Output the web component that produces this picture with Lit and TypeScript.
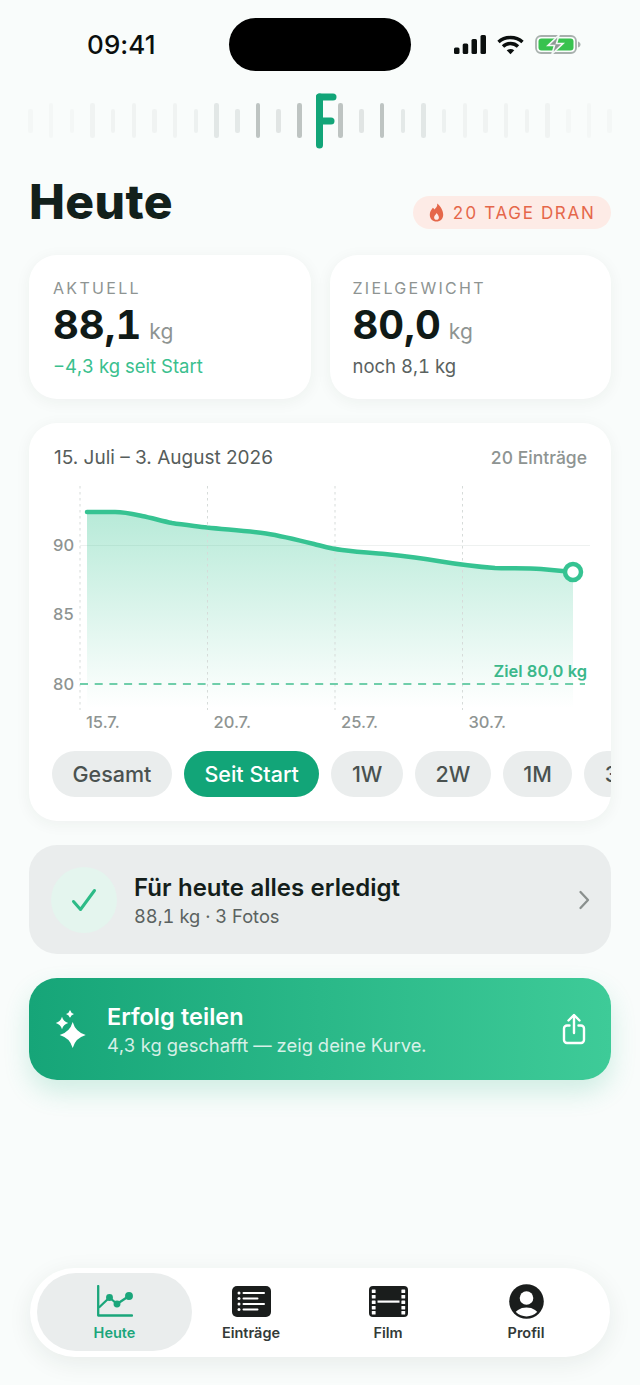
import { LitElement, html, css, svg } from "lit";
import { customElement } from "lit/decorators.js";

const CURVE = "M87 512 C98 512 106 512 115 512 C125 512 133 514 142 516 C152 518 162 521 172 523 C184 525 196 526 207 527.5 C226 529.5 248 531 266 533.5 C282 536 298 540 314 544 C324 546.5 332 549 342 550 C356 552 372 553 385 554 C403 556 420 558 438 561 C456 564 474 566.5 495 568 C512 568.500 528 568 541 569 C552 570 562 571 573 572";

const star = (cx: number, cy: number, r: number, k = 0.22) => {
  const c = r * k;
  return `M${cx} ${cy - r}Q${cx + c} ${cy - c} ${cx + r} ${cy}Q${cx + c} ${cy + c} ${cx} ${cy + r}Q${cx - c} ${cy + c} ${cx - r} ${cy}Q${cx - c} ${cy - c} ${cx} ${cy - r}Z`;
};

@customElement("app-root")
export class AppRoot extends LitElement {
  static styles = css`
    :host {
      display: flex;
      flex-direction: column;
      min-height: 1385px;
      box-sizing: border-box;
      background: #f9fcfb;
      font-family: Inter, "Liberation Sans", sans-serif;
      font-variant-numeric: tabular-nums;
      color: #141e1b;
      overflow: hidden;
    }
    * { box-sizing: border-box; }
    svg { display: block; flex: none; }

    .status { height: 89px; padding: 18px 59px 0 87px; display: flex; align-items: flex-start; }
    .time { width: 142px; font-size: 26px; font-weight: 500; line-height: 53px; color: #0b0f0e; letter-spacing: 0.1px; font-variant-numeric: normal; }
    .island { width: 182px; height: 53px; margin-left: 1px; border-radius: 27px; background: #000; flex: none; }
    .sys { margin-left: 43px; height: 53px; display: flex; align-items: center; gap: 11px; }

    .brand { height: 60px; position: relative; display: flex; justify-content: center; align-items: center; gap: 16.2px; padding-top: 3px; }
    .tick { width: 4.5px; border-radius: 2.250px; background: #a9b1af; flex: none; }
    .logo { position: absolute; left: 315px; top: 4px; }

    .head { height: 106px; padding: 0 29px; display: flex; justify-content: space-between; align-items: flex-start; }
    h1 { margin: 25px 0 0; font-size: 48px; line-height: 56px; font-weight: 800; letter-spacing: 0.4px; color: #12201b; }
    .streak { margin-top: 47px; height: 33px; width: 198px; border-radius: 17px; background: #fdebe6; color: #e5674a; display: flex; align-items: center; justify-content: center; gap: 9px; font-size: 17px; letter-spacing: 1.7px; font-weight: 400; }

    .main { padding: 0 29px; display: flex; flex-direction: column; gap: 24px; }
    .stats { display: grid; grid-template-columns: 282px 281px; gap: 19px; }
    .card { background: #fff; border-radius: 28px; box-shadow: 0 3px 16px rgba(30, 50, 44, 0.055); }
    .stat { height: 144px; padding: 24px 22px 0 24px; }
    .stat.second { padding-left: 22.500px; }
    .stat-label { font-size: 16px; line-height: 19px; letter-spacing: 2.300px; color: #8e9492; }
    .stat-val { margin-top: 3px; font-size: 40px; line-height: 48px; font-weight: 700; color: #101a17; }
    .stat-val span { font-size: 21px; font-weight: 400; color: #8e9492; margin-left: 8px; }
    .stat-sub { margin-top: -1.500px; font-size: 18.500px; line-height: 22px; color: #5a6260; }
    .stat-sub.good { color: #3abf8e; }

    .chart { height: 398px; position: relative; overflow: hidden; padding: 23px 24px 0 25px; }
    .chart-head { display: flex; justify-content: space-between; font-size: 19px; line-height: 23px; color: #565d5b; }
    .chart-head span:first-child { font-variant-numeric: normal; }
    .chart-head span:last-child { color: #8e9492; font-size: 17.500px; font-weight: 500; }
    .plot { position: absolute; left: 0; top: 0; }
    .axis { font: 500 16.500px Inter, sans-serif; fill: #8e9492; }
    .goal { font: 600 16.500px Inter, sans-serif; fill: #3bb88b; }
    .chips { position: absolute; left: 23px; top: 328px; display: flex; gap: 12px; }
    .chip { height: 46px; padding: 0 20.500px; border-radius: 23px; background: #eaeded; color: #4a5250; font-size: 21.500px; line-height: 46px; white-space: nowrap; font-weight: 500; font-variant-numeric: normal; }
    .chip.on { background: #12a578; color: #fff; }

    .done { height: 109px; border-radius: 28px; background: #eaeded; display: flex; align-items: center; padding: 0 21px 0 22px; }
    .tickc { width: 66px; height: 66px; border-radius: 50%; background: #e4f5ee; display: flex; align-items: center; justify-content: center; }
    .done-txt { margin-left: 17px; flex: 1; }
    .done-t { font-size: 24px; line-height: 30px; font-weight: 600; color: #141e1b; }
    .done-s { margin-top: 2px; font-size: 18.300px; line-height: 22px; color: #5a6260; }

    .share { height: 102px; border-radius: 28px; background: linear-gradient(90deg, #16a578, #3ecb98); box-shadow: 0 12px 26px rgba(40, 180, 135, 0.2); display: flex; align-items: center; padding: 0 25px 0 26px; color: #fff; }
    .share-txt { margin-left: 20px; flex: 1; }
    .share-t { font-size: 23.500px; line-height: 29px; font-weight: 600; }
    .share-s { font-size: 18.400px; line-height: 22px; color: rgba(255, 255, 255, 0.82); margin-top: 3px; }

    .spacer { flex: 1; }
    .nav { margin: 0 30px 28px; height: 89px; border-radius: 45px; background: #fff; box-shadow: 0 6px 24px rgba(30, 50, 44, 0.08); padding: 5px 7px 6px; display: grid; grid-template-columns: 155px 118px 156px 120px; }
    .tab { display: flex; flex-direction: column; align-items: center; gap: 5px; padding-top: 10px; font-size: 14.500px; line-height: 18px; font-weight: 600; color: #333a38; border-radius: 39px; }
    .tab.on { background: #eaeded; color: #1ba67b; }
    .ic { height: 36px; display: flex; align-items: center; justify-content: center; }
  `;

  private ticks() {
    const out = [];
    for (let i = -14; i <= 14; i++) {
      const d = Math.abs(i);
      const tall = d % 2 === 1;
      const op = d === 0 ? 0 : d <= 1 ? 0.75 : d === 3 ? 0.75 : d === 2 ? 0.3 : d === 4 ? 0.25 : d === 5 ? 0.28 : d === 6 ? 0.14 : d < 12 ? 0.11 : 0.06;
      out.push(html`<div class="tick" style="height:${tall ? 35 : 24}px;opacity:${op}"></div>`);
    }
    return out;
  }

  private chartSvg() {
    const y = 423;
    const x = 29;
    return html`<svg class="plot" width="582" height="398" viewBox="${x} ${y} 582 398">
      <defs>
        <linearGradient id="fill" x1="0" y1="0" x2="0" y2="1">
          <stop offset="0" stop-color="#38c593" stop-opacity="0.36"></stop>
          <stop offset="1" stop-color="#38c593" stop-opacity="0"></stop>
        </linearGradient>
      </defs>
      ${svg`
        <path d="M80 545.500H590" stroke="#eef1f0" stroke-width="1"/>
        <path d="${CURVE} V708 H87 Z" fill="url(#fill)"/>
        ${[80, 207.500, 335, 462.500].map((vx) => svg`<path d="M${vx} 486V710" stroke="#d6dbd9" stroke-width="1" stroke-dasharray="2.500 3.500"/>`)}
        <path d="M80 684H585" stroke="#6fceaa" stroke-width="2" stroke-dasharray="8 6.700"/>
        <path d="${CURVE}" fill="none" stroke="#36c392" stroke-width="4.500" stroke-linecap="round"/>
        <circle cx="573" cy="572" r="8" fill="#fff" stroke="#36c392" stroke-width="4.500"/>
        <text class="axis" x="53" y="551">90</text>
        <text class="axis" x="53" y="620">85</text>
        <text class="axis" x="53" y="690">80</text>
        <text class="axis" x="86" y="728">15.7.</text>
        <text class="axis" x="213.500" y="728">20.7.</text>
        <text class="axis" x="341" y="728">25.7.</text>
        <text class="axis" x="468.500" y="728">30.7.</text>
        <text class="goal" x="587" y="677" text-anchor="end">Ziel 80,0 kg</text>
      `}
    </svg>`;
  }

  render() {
    return html`
      <div class="status">
        <div class="time">09:41</div>
        <div class="island"></div>
        <div class="sys">
          <svg width="32" height="19" viewBox="0 0 32 19" fill="#0b0f0e">
            <rect x="0" y="12.500" width="5.500" height="6.500" rx="1.500"></rect>
            <rect x="8.700" y="8.500" width="5.500" height="10.500" rx="1.500"></rect>
            <rect x="17.500" y="4" width="5.500" height="15" rx="1.500"></rect>
            <rect x="26.500" y="0" width="5.500" height="19" rx="1.500"></rect>
          </svg>
          <svg width="27" height="20" viewBox="0 0 27 20" fill="none" stroke="#0b0f0e" stroke-width="3.400" stroke-linecap="butt">
            <path d="M1.500 7C8 1 19 1 25.500 7"></path>
            <path d="M6 11.500C10.200 7.500 16.800 7.500 21 11.500"></path>
            <path d="M13.500 19.300 9.700 15.300C12 13.500 15 13.500 17.300 15.300Z" fill="#0b0f0e" stroke="none"></path>
          </svg>
          <svg width="46" height="19" viewBox="0 0 46 19">
            <rect x="1" y="1" width="40" height="17" rx="5" fill="none" stroke="#a8b0ad" stroke-width="1.800"></rect>
            <rect x="3.500" y="3.500" width="35" height="12" rx="3" fill="#38c24f"></rect>
            <path d="M43 6.500c1.500.5 2.500 1.500 2.500 3s-1 2.500-2.500 3z" fill="#a8b0ad"></path>
            <path d="M24 0 13 10.500h6.500L17 19l11-10.500h-6.500z" fill="#8f9a95" stroke="#f3f8f5" stroke-width="1.600"></path>
          </svg>
        </div>
      </div>

      <div class="brand">
        ${this.ticks()}
        <svg class="logo" width="24" height="56" viewBox="0 0 24 56" fill="none" stroke="#12a578" stroke-linecap="round" stroke-width="7">
          <path d="M4.500 4V52"></path>
          <path d="M4.500 4H18"></path>
          <path d="M4.500 28H16"></path>
        </svg>
      </div>

      <div class="head">
        <h1>Heute</h1>
        <div class="streak">
          <svg width="15" height="19" viewBox="0 0 15 19">
            <path d="M8.200 0.500C8.700 3.500 7 5 5.300 6.500 5 5.700 4.600 5.200 3.900 4.700 2 7 .8 9 .8 11.700.8 15.700 3.700 18.500 7.500 18.500s6.700-2.800 6.700-6.800C14.200 7.500 11.500 3.200 8.200.5z" fill="#e5674a"></path>
            <path d="M7.600 10c-.3 1.300-2.500 2.400-2.500 4.400 0 1.500 1 2.400 2.400 2.400s2.400-.9 2.400-2.400c0-1.800-1.500-3-2.300-4.400z" fill="#fdebe6"></path>
          </svg>
          <span>20 TAGE DRAN</span>
        </div>
      </div>

      <div class="main">
        <div class="stats">
          <div class="card stat">
            <div class="stat-label">AKTUELL</div>
            <div class="stat-val">88,1<span>kg</span></div>
            <div class="stat-sub good">−4,3 kg seit Start</div>
          </div>
          <div class="card stat second">
            <div class="stat-label">ZIELGEWICHT</div>
            <div class="stat-val">80,0<span>kg</span></div>
            <div class="stat-sub">noch 8,1 kg</div>
          </div>
        </div>

        <div class="card chart">
          ${this.chartSvg()}
          <div class="chart-head"><span>15. Juli – 3. August 2026</span><span>20 Einträge</span></div>
          <div class="chips">
            <div class="chip">Gesamt</div>
            <div class="chip on">Seit Start</div>
            <div class="chip">1W</div>
            <div class="chip">2W</div>
            <div class="chip">1M</div>
            <div class="chip">3M</div>
          </div>
        </div>

        <div class="done">
          <div class="tickc">
            <svg width="26" height="24" viewBox="0 0 26 24" fill="none" stroke="#2dbb87" stroke-width="3" stroke-linecap="round" stroke-linejoin="round">
              <path d="M2.500 13.500 9.500 21.500 23.500 2.500"></path>
            </svg>
          </div>
          <div class="done-txt">
            <div class="done-t">Für heute alles erledigt</div>
            <div class="done-s">88,1 kg · 3 Fotos</div>
          </div>
          <svg width="12" height="20" viewBox="0 0 12 20" fill="none" stroke="#8a908e" stroke-width="2.300" stroke-linecap="round" stroke-linejoin="round">
            <path d="M2.500 2l7.500 8-7.500 8"></path>
          </svg>
        </div>

        <div class="share">
          <svg width="32" height="40" viewBox="0 0 32 40" fill="#fff">
            <path d="${star(17.7, 26, 13)}"></path>
            <path d="${star(7, 14, 6.2)}"></path>
            <path d="${star(15, 5, 4)}"></path>
          </svg>
          <div class="share-txt">
            <div class="share-t">Erfolg teilen</div>
            <div class="share-s">4,3 kg geschafft — zeig deine Kurve.</div>
          </div>
          <svg width="24" height="32" viewBox="0 0 24 32" fill="none" stroke="#fff" stroke-width="2.400" stroke-linecap="round" stroke-linejoin="round">
            <path d="M12 20V2.500"></path>
            <path d="M6.500 7.500 12 2l5.500 5.500"></path>
            <path d="M7.500 12.500H5a3 3 0 0 0-3 3V27a3 3 0 0 0 3 3h14a3 3 0 0 0 3-3V15.500a3 3 0 0 0-3-3h-2.500"></path>
          </svg>
        </div>
      </div>

      <div class="spacer"></div>

      <div class="nav">
        <div class="tab on">
          <div class="ic">
            <svg width="36" height="32" viewBox="0 0 36 32" fill="none" stroke="#1ba67b" stroke-width="2.300" stroke-linecap="round" stroke-linejoin="round">
              <path d="M1.200 1V30.500H35"></path>
              <path d="M2.500 22 12.500 12.500 20 19 32 11"></path>
              <circle cx="12.500" cy="12.500" r="2.300" fill="#1ba67b"></circle>
              <circle cx="20" cy="19" r="2.300" fill="#1ba67b"></circle>
              <circle cx="32" cy="11" r="2.800" fill="#1ba67b"></circle>
            </svg>
          </div>
          Heute
        </div>
        <div class="tab">
          <div class="ic">
            <svg width="39" height="31" viewBox="0 0 39 31">
              <rect width="39" height="31" rx="5" fill="#1a1d1c"></rect>
              <g fill="#fff">
                <circle cx="7" cy="7" r="1.500"></circle><circle cx="7" cy="12.500" r="1.500"></circle><circle cx="7" cy="18" r="1.500"></circle><circle cx="7" cy="23.500" r="1.500"></circle>
                <rect x="10.500" y="6" width="22.500" height="2" rx="1"></rect>
                <rect x="10.500" y="11.500" width="16" height="2" rx="1"></rect>
                <rect x="10.500" y="17" width="22.500" height="2" rx="1"></rect>
                <rect x="10.500" y="22.500" width="16" height="2" rx="1"></rect>
              </g>
            </svg>
          </div>
          Einträge
        </div>
        <div class="tab">
          <div class="ic">
            <svg width="39" height="31" viewBox="0 0 39 31">
              <rect width="39" height="31" rx="4" fill="#1a1d1c"></rect>
              <g fill="#fff">
                ${[3.5, 9, 14.5, 20, 25].map((y) => svg`<rect x="2.800" y="${y}" width="3.800" height="3.500" rx="0.600"></rect><rect x="32.400" y="${y}" width="3.800" height="3.500" rx="0.600"></rect>`)}
                <rect x="8.500" y="14.500" width="22" height="2.200"></rect>
              </g>
            </svg>
          </div>
          Film
        </div>
        <div class="tab">
          <div class="ic">
            <svg width="35" height="35" viewBox="0 0 35 35">
              <defs><clipPath id="pc"><circle cx="17.500" cy="17.500" r="15"></circle></clipPath></defs>
              <circle cx="17.500" cy="17.500" r="17.300" fill="#1a1d1c"></circle>
              <circle cx="17.500" cy="14" r="6.800" fill="#fff"></circle>
              <ellipse cx="17.500" cy="32" rx="12" ry="8.500" fill="#fff" clip-path="url(#pc)"></ellipse>
            </svg>
          </div>
          Profil
        </div>
      </div>
    `;
  }
}
